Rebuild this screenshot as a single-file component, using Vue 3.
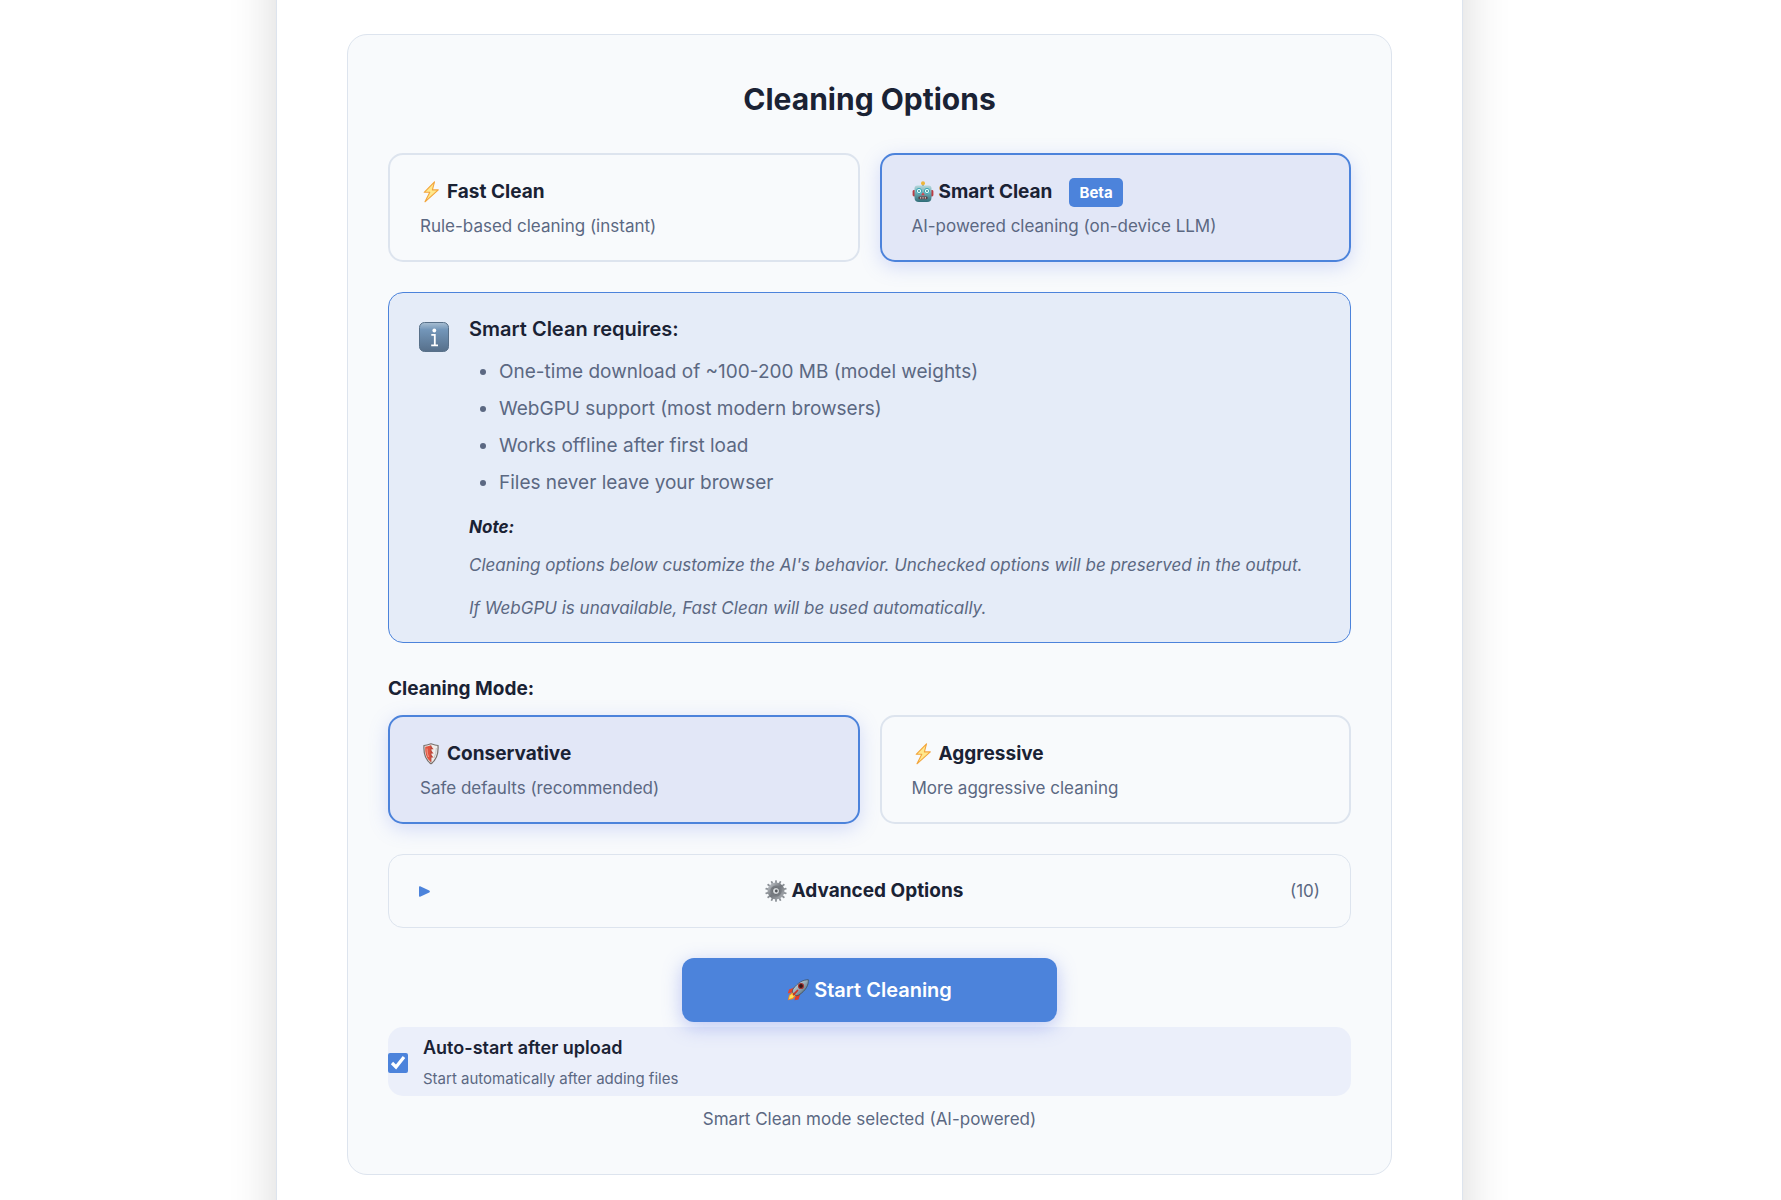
<script setup>
import { ref, computed } from "vue";

const engine = ref("smart");
const mode = ref("conservative");
const showAdvanced = ref(false);
const autoStart = ref(true);

const engines = [
  { value: "fast", icon: "bolt", title: "Fast Clean", text: "Rule-based cleaning (instant)" },
  { value: "smart", icon: "robot", title: "Smart Clean", text: "AI-powered cleaning (on-device LLM)", badge: "Beta" },
];

const modes = [
  { value: "conservative", icon: "shield", title: "Conservative", text: "Safe defaults (recommended)" },
  { value: "aggressive", icon: "bolt", title: "Aggressive", text: "More aggressive cleaning" },
];

const requirements = [
  "One-time download of ~100-200 MB (model weights)",
  "WebGPU support (most modern browsers)",
  "Works offline after first load",
  "Files never leave your browser",
];

const teeth = Array.from({ length: 14 }, (_, i) => (i * 360) / 14);

const status = computed(() =>
  engine.value === "smart"
    ? "Smart Clean mode selected (AI-powered)"
    : "Fast Clean mode selected (rule-based)"
);
</script>

<template>
  <div class="page">
    <svg class="defs" aria-hidden="true">
      <defs>
        <linearGradient id="metal" x1="0" y1="0" x2="1" y2="1">
          <stop offset="0" stop-color="#b9bdc2" />
          <stop offset="0.5" stop-color="#73777d" />
          <stop offset="1" stop-color="#a7abb0" />
        </linearGradient>
        <linearGradient id="teal" x1="0" y1="0" x2="0" y2="1">
          <stop offset="0" stop-color="#b5d8dc" />
          <stop offset="0.5" stop-color="#6aa5ad" />
          <stop offset="1" stop-color="#2f6d78" />
        </linearGradient>
        <linearGradient id="info" x1="0" y1="0" x2="0" y2="1">
          <stop offset="0" stop-color="#a9bfd3" />
          <stop offset="0.25" stop-color="#7396b9" />
          <stop offset="1" stop-color="#566f8a" />
        </linearGradient>
        <linearGradient id="hull" x1="0" y1="0" x2="1" y2="1">
          <stop offset="0" stop-color="#f1f5f7" />
          <stop offset="0.5" stop-color="#93a9b5" />
          <stop offset="1" stop-color="#364955" />
        </linearGradient>
        <symbol id="bolt" viewBox="0 0 22 22">
          <path d="M14.5 0.8 4.2 11.3h5.6L5 20.8 18.3 8.9h-5.9z" fill="#ffe88c" stroke="#f3a53c" stroke-width="1.1" stroke-linejoin="round" />
        </symbol>
        <symbol id="robot" viewBox="0 0 22 22">
          <path d="M11 3v3" stroke="#7a8c90" stroke-width="2" />
          <circle cx="11" cy="2.2" r="2" fill="#eeb63c" />
          <rect x="0.6" y="9" width="3.4" height="6.5" rx="1.4" fill="#bd3c43" />
          <rect x="18" y="9" width="3.4" height="6.5" rx="1.4" fill="#bd3c43" />
          <path d="M5.5 4.5h11a3 3 0 0 1 3 3v9q0 4.5-4.5 4.5H7q-4.5 0-4.5-4.5v-9a3 3 0 0 1 3-3z" fill="url(#teal)" />
          <circle cx="7" cy="10" r="2.6" fill="#e3ffff" stroke="#3aa6b5" />
          <circle cx="15" cy="10" r="2.6" fill="#e3ffff" stroke="#3aa6b5" />
          <circle cx="7" cy="10" r="0.9" fill="#307984" />
          <circle cx="15" cy="10" r="0.9" fill="#307984" />
          <path d="m11 11.2 1.8 3H9.2z" fill="#d8434a" />
          <rect x="6.5" y="15.5" width="9" height="2.8" rx="0.8" fill="#5b4146" />
          <path d="M8 16.9h1.2m1.2 0h1.2m1.2 0H14" stroke="#f1d9d5" stroke-width="1.4" />
        </symbol>
        <symbol id="shield" viewBox="0 0 22 22">
          <path d="M11 .8q4.5 1.6 7 1.7c.5 7-.7 13.9-7 18.3C4.7 16.4 3.5 9.5 4 2.5 6.5 2.4 11 .8 11 .8z" fill="#efecea" stroke="#77706b" stroke-width="1.2" />
          <path d="M11 2.2Q7.5 3.6 5.2 3.8C5 10 6 15.4 11 19.1z" fill="#e1533f" />
          <path d="m11 3 2.6 3.2H11zM11 7.2l2.6 3.2H11zM11 11.4l2.6 3.2H11z" fill="#c4473a" />
          <path d="M11 2.5v16.5" stroke="#a8453a" stroke-width="0.8" />
          <path d="M7 5.5q-.2 5 1.5 8.5" fill="none" stroke="#f2a08e" />
          <path d="M16.3 5q0 6-2.3 10" fill="none" stroke="#c3c4c6" />
        </symbol>
        <symbol id="gear" viewBox="0 0 22 22">
          <g fill="#8d9298">
            <rect v-for="angle in teeth" :key="angle" x="10.1" y="0.2" width="1.8" height="4" rx="0.5" :transform="`rotate(${angle} 11 11)`" />
          </g>
          <circle cx="11" cy="11" r="6.5" fill="none" stroke="url(#metal)" stroke-width="4" />
          <circle cx="11" cy="11" r="5.6" fill="#777b81" />
          <circle cx="11" cy="11" r="3.5" fill="#d9dcdf" stroke="#56595e" stroke-width="0.8" />
          <circle cx="11.3" cy="11" r="1.4" fill="#54575c" />
        </symbol>
        <symbol id="rocket" viewBox="0 0 22 22">
          <path d="M7.5 8.5 2 10.5.8 14.5l5-1.2z" fill="#e8402a" />
          <path d="m13.5 14.5-2 6-4 .7 1.2-5z" fill="#e33b28" />
          <path d="M5.5 13 2 16l-1.2 5.2 5.4-1.2 2.8-3.5z" fill="#f58a20" />
          <path d="m5.5 14.5-2.8 2.3-.7 3.2 3.4-.9 2.1-2.6z" fill="#ffe258" />
          <path d="M21.3.7c.4 5.3-2 10.3-9.3 15.3l-3 .8-3.8-3.8.8-3C11 3.5 16 .8 21.3.7z" fill="url(#hull)" stroke="#394650" stroke-width="0.7" />
          <circle cx="14" cy="7" r="2.5" fill="#321516" stroke="#a43635" stroke-width="1.2" />
          <path d="m10.5 11.5-4 4.2" stroke="#c93125" stroke-width="1.8" stroke-linecap="round" />
        </symbol>
      </defs>
    </svg>

    <main class="container">
      <section class="panel">
        <h2 class="heading">Cleaning Options</h2>

        <div class="cards">
          <button
            v-for="item in engines"
            :key="item.value"
            type="button"
            :class="['card', { card_active: engine === item.value }]"
            :aria-pressed="engine === item.value"
            @click="engine = item.value"
          >
            <span class="card-title">
              <svg class="emoji" aria-hidden="true"><use :href="`#${item.icon}`" /></svg>
              {{ item.title }}
              <span v-if="item.badge" class="badge">{{ item.badge }}</span>
            </span>
            <span class="card-text">{{ item.text }}</span>
          </button>
        </div>

        <div v-if="engine === 'smart'" class="info">
          <svg class="info-icon" viewBox="0 0 30 30" aria-hidden="true">
            <rect x="0.5" y="0.5" width="29" height="29" rx="5" fill="url(#info)" stroke="#587089" />
            <circle cx="15.3" cy="8.5" r="1.9" fill="#fff" />
            <path d="M12.3 12.9h3.5v10.3M12.2 23.4h6.8" fill="none" stroke="#fff" stroke-width="1.8" />
          </svg>
          <div class="info-body">
            <strong class="info-title">Smart Clean requires:</strong>
            <ul class="info-list">
              <li v-for="line in requirements" :key="line">{{ line }}</li>
            </ul>
            <div class="info-note">
              <strong>Note:</strong>
              <p>Cleaning options below customize the AI's behavior. Unchecked options will be preserved in the output.</p>
              <p>If WebGPU is unavailable, Fast Clean will be used automatically.</p>
            </div>
          </div>
        </div>

        <h3 class="mode-label">Cleaning Mode:</h3>
        <div class="cards">
          <button
            v-for="item in modes"
            :key="item.value"
            type="button"
            :class="['card', { card_active: mode === item.value }]"
            :aria-pressed="mode === item.value"
            @click="mode = item.value"
          >
            <span class="card-title">
              <svg class="emoji" aria-hidden="true"><use :href="`#${item.icon}`" /></svg>
              {{ item.title }}
            </span>
            <span class="card-text">{{ item.text }}</span>
          </button>
        </div>

        <button
          type="button"
          class="advanced"
          :aria-expanded="showAdvanced"
          @click="showAdvanced = !showAdvanced"
        >
          <svg :class="['arrow', { arrow_open: showAdvanced }]" viewBox="0 0 10 10" aria-hidden="true">
            <path d="M0 .8Q0 0 1 .2l8.3 4q1.2.8 0 1.6L1 9.8Q0 10 0 9.2z" fill="#4c83db" />
          </svg>
          <span class="advanced-title">
            <svg class="emoji" aria-hidden="true"><use href="#gear" /></svg>
            Advanced Options
          </span>
          <span class="count">(10)</span>
        </button>

        <button type="button" class="start">
          <svg class="emoji" aria-hidden="true"><use href="#rocket" /></svg>
          Start Cleaning
        </button>

        <label class="auto" for="auto-start">
          <input id="auto-start" v-model="autoStart" type="checkbox" class="checkbox" />
          <span>
            <span class="auto-title">Auto-start after upload</span>
            <span class="auto-text">Start automatically after adding files</span>
          </span>
        </label>

        <p class="status">{{ status }}</p>
      </section>
    </main>
  </div>
</template>

<style>
body {
  margin: 0;
  background: #fff;
}
</style>

<style scoped>
.page {
  height: 100vh;
  overflow: hidden;
  box-sizing: border-box;
  padding-right: 42px;
  font-family: Inter, "Liberation Sans", sans-serif;
  color: #1a2234;
}

.page * {
  box-sizing: border-box;
}

.defs {
  position: absolute;
  width: 0;
  height: 0;
}

/* runs past the top and bottom edge of the window */
.container {
  max-width: 1187px;
  margin: -60px auto;
  padding: 94px 70px;
  background: #fff;
  border: 1px solid #dde4ee;
  border-top: 0;
  box-shadow: 0 0 45px rgba(0, 0, 0, 0.16);
}

.panel {
  padding: 40px;
  background: #f8fafc;
  border: 1px solid #dde4ee;
  border-radius: 20px;
}

.heading {
  margin: 0 0 30px;
  font-size: 30px;
  line-height: 48px;
  font-weight: 700;
  text-align: center;
}

.cards {
  display: grid;
  grid-template-columns: 1fr 1fr;
  gap: 20px;
  margin-bottom: 30px;
}

.card {
  display: flex;
  flex-direction: column;
  gap: 4px;
  padding: 21px 30px 19px;
  text-align: left;
  font-family: inherit;
  color: inherit;
  background: #f8fafc;
  border: 2px solid #dde4ee;
  border-radius: 15px;
  cursor: pointer;
}

.card_active {
  background: #e2e7f7;
  border-color: #4c83db;
  box-shadow: 0 5px 19px rgba(102, 126, 234, 0.25);
}

.card-title {
  display: flex;
  align-items: center;
  gap: 5px;
  font-size: 19px;
  line-height: 32px;
  font-weight: 700;
}

.emoji {
  flex: none;
  width: 22px;
  height: 22px;
}

.badge {
  margin-left: 12px;
  padding: 0 10px;
  font-size: 15px;
  line-height: 29px;
  color: #fff;
  background: #4c83db;
  border-radius: 5px;
}

.card-text {
  font-size: 17px;
  line-height: 29px;
  color: #5b6882;
}

.info {
  display: flex;
  gap: 20px;
  margin-bottom: 30px;
  padding: 20px 30px 19px;
  background: #e5ecf8;
  border: 1px solid #4c83db;
  border-radius: 15px;
}

.info-icon {
  flex: none;
  width: 30px;
  height: 30px;
  margin-top: 9px;
}

.info-title {
  display: block;
  font-size: 20px;
  line-height: 32px;
  font-weight: 600;
}

.info-list {
  margin: 11px 0 14px;
  padding-left: 30px;
  font-size: 19px;
  line-height: 32px;
  color: #5b6882;
}

.info-list li {
  margin-bottom: 5px;
}

.info-note {
  font-size: 17px;
  line-height: 29px;
  font-style: italic;
  color: #5b6882;
}

.info-note strong {
  font-weight: 700;
  color: #1a2234;
}

.info-note p {
  margin: 9px 0 14px;
}

.info-note p:last-child {
  margin-bottom: 0;
}

.mode-label {
  margin: 0 0 10px;
  font-size: 19px;
  line-height: 32px;
  font-weight: 700;
}

.advanced {
  display: flex;
  align-items: center;
  justify-content: space-between;
  width: 100%;
  margin-bottom: 30px;
  padding: 20px 30px;
  font-family: inherit;
  color: inherit;
  background: #f8fafc;
  border: 1px solid #dde4ee;
  border-radius: 15px;
  cursor: pointer;
}

.arrow {
  width: 11px;
  height: 11px;
  margin-right: 8px;
}

.arrow_open {
  transform: rotate(90deg);
}

.advanced-title {
  display: flex;
  align-items: center;
  gap: 5px;
  font-size: 19px;
  line-height: 32px;
  font-weight: 700;
}

.count {
  font-size: 17px;
  color: #5b6882;
}

.start {
  display: flex;
  align-items: center;
  justify-content: center;
  gap: 5px;
  width: 375px;
  max-width: 100%;
  margin: 0 auto 5px;
  padding: 16px 20px;
  font-family: inherit;
  font-size: 20px;
  line-height: 32px;
  font-weight: 600;
  color: #fff;
  background: #4c83db;
  border: 0;
  border-radius: 12px;
  box-shadow: 0 5px 19px rgba(102, 126, 234, 0.4);
  cursor: pointer;
}

.auto {
  display: flex;
  align-items: center;
  gap: 15px;
  padding: 5px 0 3px;
  background: rgba(90, 120, 225, 0.08);
  border-radius: 15px;
  cursor: pointer;
}

.checkbox {
  width: 20px;
  height: 20px;
  margin: 0;
  accent-color: #4c83db;
}

.auto-title {
  display: block;
  font-size: 18px;
  line-height: 31px;
  font-weight: 600;
}

.auto-text {
  display: block;
  margin-top: 2px;
  font-size: 15px;
  line-height: 28px;
  color: #5b6882;
}

.status {
  margin: 9px 0 0;
  font-size: 17px;
  line-height: 29px;
  text-align: center;
  color: #5b6882;
}
</style>
